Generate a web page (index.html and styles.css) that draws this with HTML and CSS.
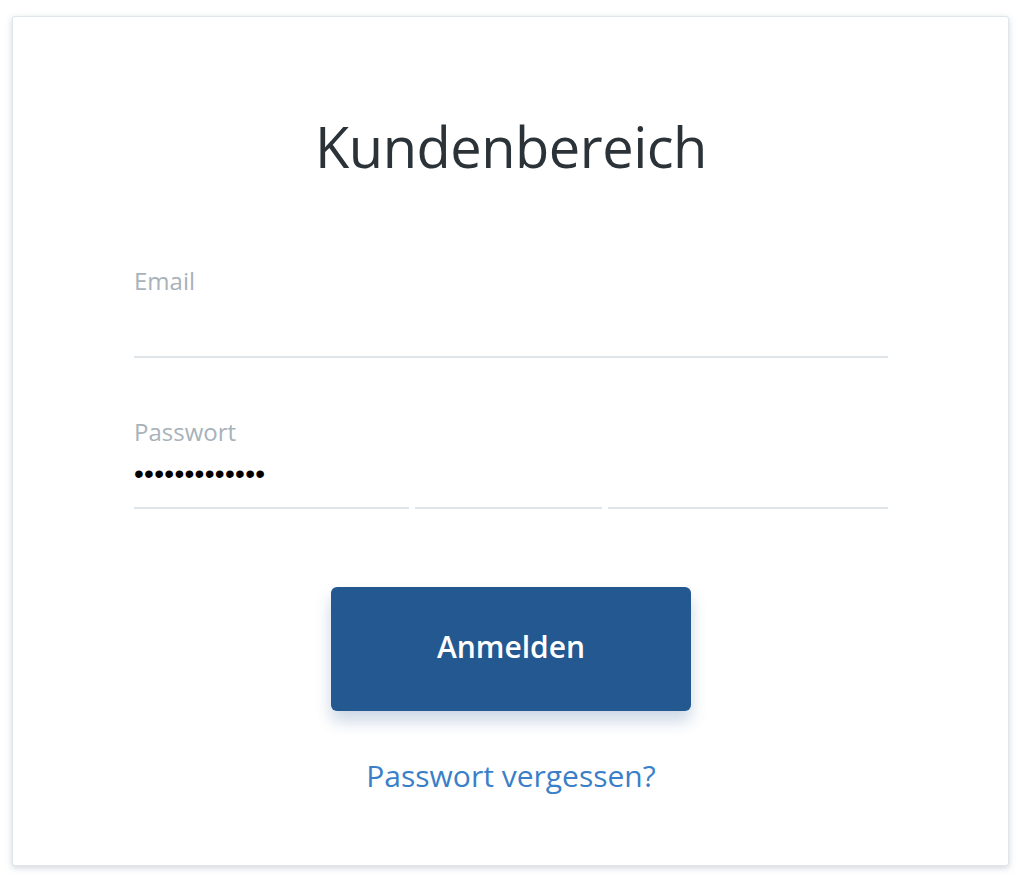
FILE: index.html
```html
<!DOCTYPE html>
<html lang="de">
<head>
<meta charset="utf-8">
<title>Kundenbereich</title>
<link rel="stylesheet" href="styles.css">
</head>
<body>
<main class="card">
  <h1 class="title">Kundenbereich</h1>
  <form class="form">
    <div class="field">
      <label class="label">Email</label>
      <div class="value"></div>
      <div class="line"></div>
    </div>
    <div class="field">
      <label class="label">Passwort</label>
      <div class="value dots">•••••••••••••</div>
      <div class="line split">
        <span class="seg s1"></span>
        <span class="seg s2"></span>
        <span class="seg s3"></span>
      </div>
    </div>
    <div class="actions">
      <button type="button" class="btn">Anmelden</button>
      <a class="link" href="#">Passwort vergessen?</a>
    </div>
  </form>
</main>
</body>
</html>
```
FILE: styles.css
```css
html, body {
  margin: 0;
  padding: 0;
  background: #ffffff;
}
body {
  font-family: "Open Sans", "Noto Sans", sans-serif;
  padding: 16px 9px 14px 12px;
}
.card {
  box-sizing: border-box;
  width: 997px;
  height: 850px;
  border: 1px solid #dfe5e8;
  border-radius: 3px;
  box-shadow: 0 2px 6px rgba(160, 175, 185, 0.5);
  padding: 0 120px 0 121px;
  background: #fff;
}
.title {
  margin: 0;
  padding-top: 95px;
  text-align: center;
  font-weight: 400;
  font-size: 56px;
  line-height: 68px;
  color: #2c3338;
  letter-spacing: -0.5px;
}
.form {
  margin-top: 86px;
}
.field {
  display: flex;
  flex-direction: column;
  margin-bottom: 59px;
}
.label {
  font-size: 24px;
  line-height: 30px;
  color: #a7b2ba;
}
.value {
  box-sizing: border-box;
  height: 60px;
}
.dots {
  font-family: "Liberation Sans", Arial, sans-serif;
  font-size: 28px;
  line-height: 34px;
  padding-top: 10px;
  letter-spacing: 0.3px;
  color: #000;
}
.line {
  height: 2px;
  background: #dfe5e8;
}
.line.split {
  background: none;
  display: flex;
  gap: 6px;
}
.seg {
  height: 2px;
  background: #dfe5e8;
}
.s1 { width: 275px; }
.s2 { width: 187px; }
.s3 { flex: 1; }
.actions {
  display: flex;
  flex-direction: column;
  align-items: center;
  margin-top: 78px;
}
.btn {
  width: 360px;
  height: 124px;
  padding: 0 0 5px;
  border: none;
  border-radius: 6px;
  background: #245891;
  color: #fff;
  font-family: "Open Sans", "Noto Sans", sans-serif;
  font-weight: 600;
  font-size: 30px;
  box-shadow: 0 10px 16px rgba(36, 88, 145, 0.24);
  cursor: pointer;
}
.link {
  margin-top: 44px;
  font-size: 30px;
  color: #3a7fc8;
  text-decoration: none;
}
```
